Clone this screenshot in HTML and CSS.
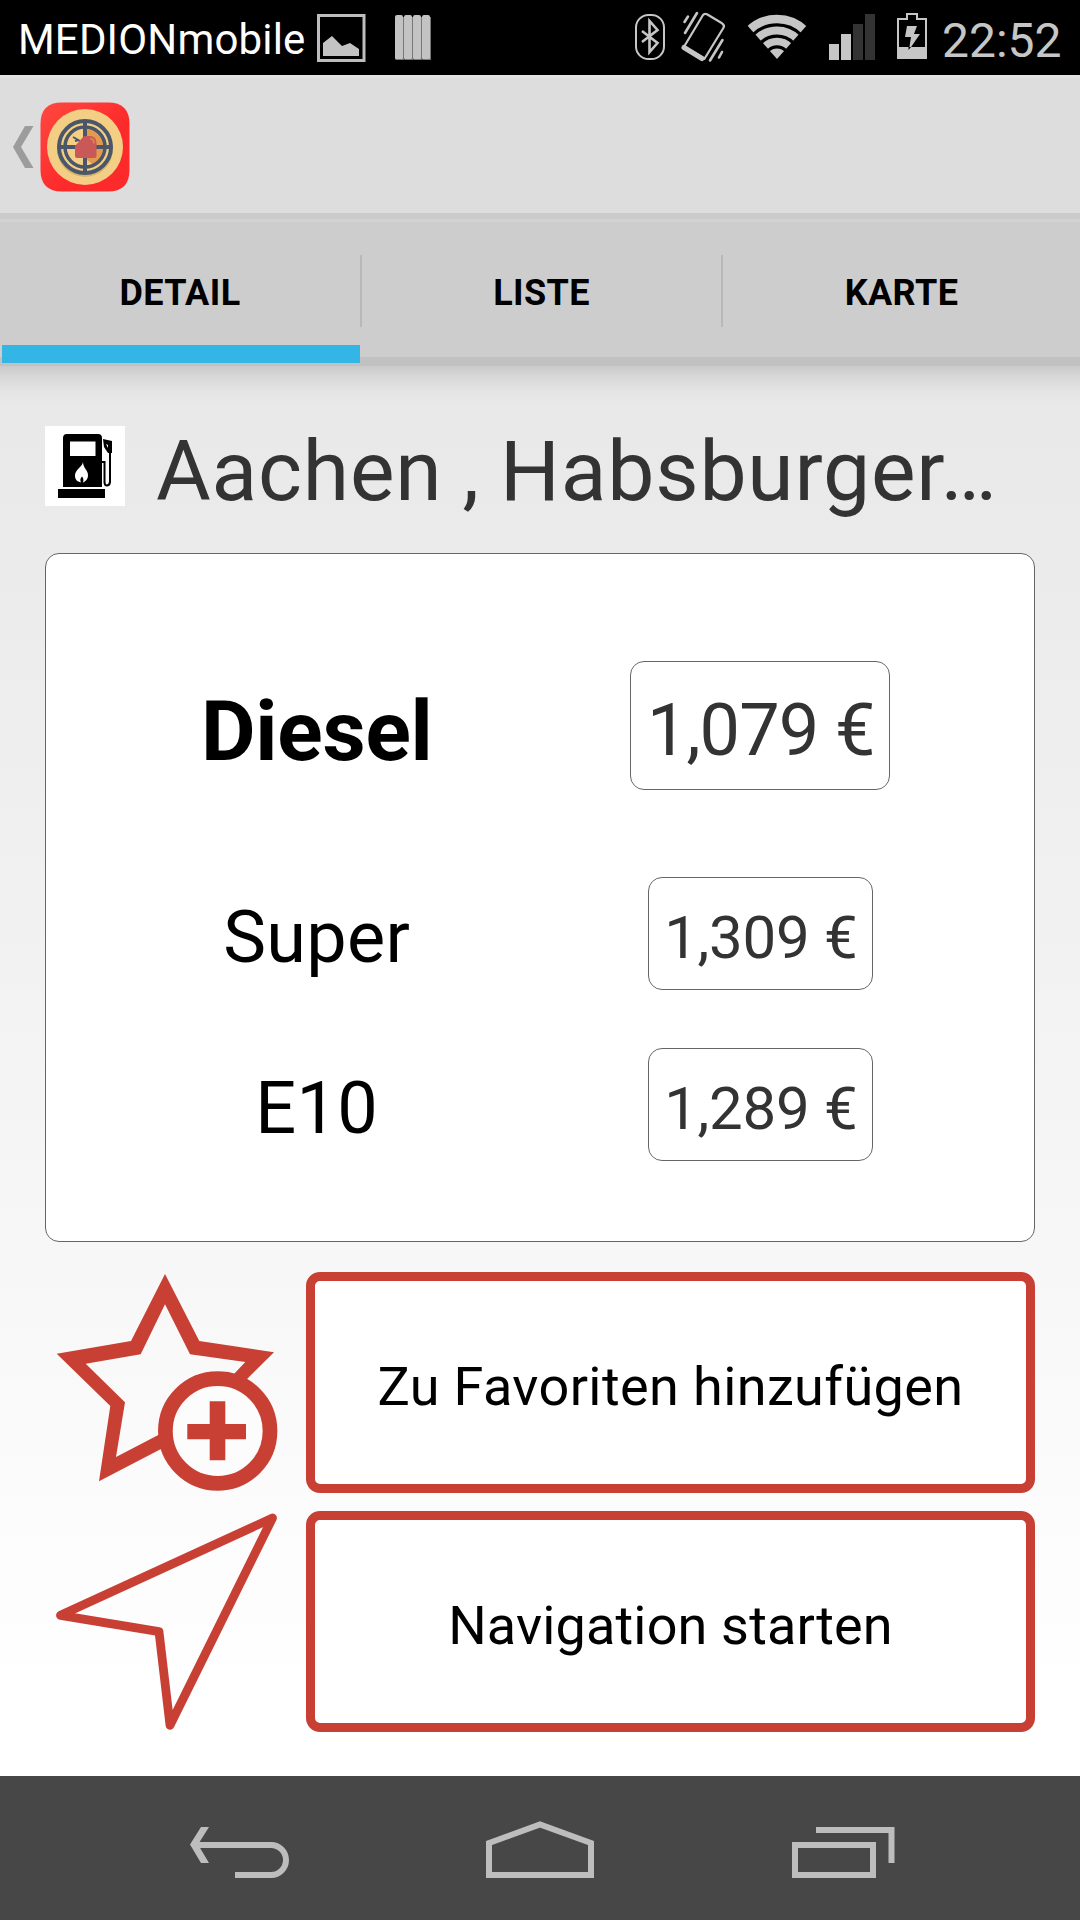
FILE: index.html
```html
<!DOCTYPE html>
<html lang="de">
<head>
<meta charset="utf-8">
<title>Aachen, Habsburger</title>
<link rel="stylesheet" href="styles.css">
</head>
<body>
<header class="status">
  <span class="carrier">MEDIONmobile</span>
  <svg class="status-left" width="124" height="75" viewBox="312 0 124 75">
    <rect x="318.5" y="15.5" width="45.500" height="45" fill="none" stroke="#bdbdbd" stroke-width="3"/>
    <path d="M323 56V43l9-7 10 10 8-3 9 6v7z" fill="#c3c3c3"/>
    <g fill="#c3c3c3"><rect x="395" y="15" width="8" height="45" rx="2"/><rect x="404" y="15" width="8" height="45" rx="2"/><rect x="413" y="15" width="8" height="45" rx="2"/><rect x="422" y="15" width="8" height="45" rx="2"/></g>
    <path d="M403.500 17v43M412.500 17v43M421.500 17v43M430.500 17v43M396 59.500h7M405 59.500h7M414 59.500h7M423 59.500h7" stroke="#777"/>
  </svg>
  <svg class="status-right" width="310" height="75" viewBox="630 0 310 75">
    <g fill="none" stroke="#c6c6c6">
      <rect x="636" y="15" width="28" height="44" rx="12.500" stroke-width="2"/>
      <path d="M642 31l15.500 12-8 9V21l8 9L642 42" stroke-width="2.600"/>
      <path d="M703 15q1.500-2 4-.7l15 9q3 2 1.500 4.500l-19 31-20.500-12z" stroke-width="2.200" stroke-linejoin="round"/>
      <path d="M684 47.500l18 11" stroke-width="5" stroke-linecap="round"/>
      <path d="M697 13l-12 20M688 16.500l-3.500 5.500M722.500 40l-12.500 20.500M722 52l-3 5.500" stroke-width="2.600" stroke-linecap="round"/>
    </g>
    <clipPath id="wedge"><path d="M777 59L746 24V10h62v14z"/></clipPath>
    <g clip-path="url(#wedge)" fill="none" stroke="#c6c6c6">
      <circle cx="777" cy="59" r="40" stroke-width="8.500"/>
      <circle cx="777" cy="59" r="28.500" stroke-width="8"/>
      <circle cx="777" cy="59" r="17.500" stroke-width="7.500"/>
      <circle cx="777" cy="59" r="5.300" stroke-width="10.600"/>
    </g>
    <path d="M829 44h10v16h-10zM841 34h10v26h-10z" fill="#c6c6c6"/>
    <path d="M853 24h10v36h-10zM865 14h10v46h-10z" fill="#333"/>
    <path d="M898 58V19h9v-5h10v5h9v39z" fill="none" stroke="#c6c6c6" stroke-width="2"/>
    <path d="M897 47h30v12h-30z" fill="#c6c6c6"/>
    <path d="M907 26h10l-3 8h6l-11 16 2-13h-6z" fill="#c6c6c6"/>
    <path d="M911 47h-2.500v3z"/>
  </svg>
  <span class="clock">22:52</span>
</header>

<div class="actionbar">
  <svg width="130" height="138" viewBox="0 0 130 138">
    <defs><linearGradient id="red" x1="0" y1="0" x2="1" y2="1"><stop offset="0" stop-color="#ff4840"/><stop offset=".6" stop-color="#fd2a2c"/></linearGradient></defs>
    <path d="M25 51h8.500L21 72l12.500 21H25L13 72z" fill="#9c9c9c"/>
    <path d="M62 27.500h46q21.500 0 21.500 21.500v46q0 21.500-21.500 21.500H62q-21.500 0-21.500-21.500V49q0-21.500 21.500-21.500z" fill="url(#red)"/>
    <circle cx="85" cy="72" r="38" fill="#f3cf85"/>
    <circle cx="85" cy="74" r="28" fill="#d3b26f"/>
    <circle cx="85" cy="72" r="27" fill="#f3cf85"/>
    <path d="M85 52a20 20 0 0 1 8 38l-8-7z" fill="#e39a4e"/>
    <g fill="none" stroke="#4b5668">
      <circle cx="85" cy="72" r="26" stroke-width="4"/>
      <circle cx="85" cy="72" r="20" stroke-width="3.500"/>
      <path d="M85 45v54M58 72h54" stroke-width="4"/>
      <path d="M73 62l7 4M75 66l4-1" stroke-width="2"/>
    </g>
    <path d="M75 71l8-9q1-1 3-1h5q5.500 1 5.500 7v13q0 2-2 2H77q-2 0-2-2z" fill="#c95959"/>
    <path d="M90 63.500q4 0 4 5" fill="none" stroke="#de8054" stroke-width="2"/>
  </svg>
</div>

<nav class="tabs">
  <a class="tab active">DETAIL</a>
  <a class="tab">LISTE</a>
  <a class="tab">KARTE</a>
</nav>

<main class="content">
  <div class="heading">
    <svg width="80" height="80" viewBox="0 0 80 80">
      <path d="M0 0h80v80H0z" fill="#fff"/>
      <path d="M22 8h31q4 0 4 4v49H18V12q0-4 4-4zM13 63h47v9H13z"/>
      <path d="M25 15.500h25.500V30H25z" fill="#fff"/>
      <path d="M38 36c0 6 5 8 5 13 0 4-2 6-5 7.500 1-3 0-5-1-6-2 2-2 4-1 6-4-1-6-3-6-7 0-6 7-8 8-13.500z" fill="#fff"/>
      <path d="M58 13l9 2v12h-4l-4-6z"/>
      <path d="M61 18l2 1v3z" fill="#fff"/>
      <path d="M57 36h2.500v20q0 3.500 2.500 3.500t3-3.500V27" fill="none" stroke="#000" stroke-width="2"/>
    </svg>
    <h1>Aachen , Habsburger…</h1>
  </div>

  <section class="prices">
    <span class="fuel main-fuel">Diesel</span><span class="price main-price">1,079 €</span>
    <span class="fuel">Super</span><span class="price">1,309 €</span>
    <span class="fuel">E10</span><span class="price">1,289 €</span>
  </section>

  <div class="action">
    <svg width="243" height="221" viewBox="0 0 243 221" fill="#c84034">
      <path fill-rule="evenodd" d="M120 2l34.300 67 74.700 11.300L202 107l-86 70-62 32.300L65.300 134 11.700 81.700 86 69zM120 32.300L95.700 82.300l-55 9.400L80 130.300 71 185l42.300-22 75-60.300 12-12.700-55.300-7.700z"/>
      <circle cx="172.700" cy="159" r="52.300" fill="#fcfcfc" stroke="#c84034" stroke-width="14.700"/>
      <path d="M164.700 129.300h15.600V152H201v15.300h-20.700v21h-15.600v-21h-22.400V152h22.400z"/>
    </svg>
    <button class="favorite">Zu Favoriten hinzufügen</button>
  </div>
  <div class="action">
    <svg width="243" height="221" viewBox="0 0 243 221">
      <path d="M227.500 7L15.500 104.300l98.500 16.400 11 93.600z" fill="none" stroke="#c84034" stroke-width="8.800" stroke-linejoin="round"/>
    </svg>
    <button class="navigate">Navigation starten</button>
  </div>
</main>

<footer class="navbar">
  <svg width="1080" height="144" viewBox="0 1776 1080 144" fill="none" stroke="#bdbdbd" stroke-width="6">
    <path d="M198 1845h73a15 15 0 0 1 0 30h-36"/>
    <path d="M206 1827h8l-11 17.500 11 18.500h-8l-11-18.500z" fill="#bdbdbd" stroke="none" transform="translate(-5 0)"/>
    <path d="M489 1875v-32l51-18.500 51 18.500v32z"/>
    <path d="M795 1845h78v30h-78zM816 1830h75.500v33"/>
  </svg>
</footer>
</body>
</html>
```
FILE: styles.css
```css
* { box-sizing: border-box; }

body {
  margin: 0;
  width: 1080px;
  height: 1920px;
  display: flex;
  flex-direction: column;
  font-family: Roboto, "Liberation Sans", sans-serif;
  color: #000;
  background: linear-gradient(#e8e8e8 366px, #ebebeb 560px, #f7f7f7 1260px, #fff 1700px);
}

svg { display: block; flex: none; }

.status {
  height: 75px;
  display: flex;
  align-items: center;
  padding: 0 18px;
  background: #000;
  color: #fff;
}
.carrier { font-size: 42px; letter-spacing: .17px; width: 294px; padding-top: 4px; }
.status-right { margin-left: 194px; }
.clock { font-size: 48px; color: #c6c6c6; margin-left: 2px; padding-top: 6px; }

.actionbar {
  height: 138px;
  background: #ddd;
  border-top: 3px solid #e2e2e2;
}
.actionbar svg { margin-top: -3px; }

.tabs {
  height: 153px;
  display: grid;
  grid-template-columns: 360px 361px 359px;
  background: linear-gradient(#cbcbcb 6px, #d2d2d2 6px, #d2d2d2 9px, #cdcdcd 9px, #cdcdcd 144px, #c1c1c1 144px);
}
.tab {
  position: relative;
  display: flex;
  align-items: center;
  justify-content: center;
  padding-top: 6px;
  font-size: 36px;
  font-weight: 700;
  letter-spacing: .4px;
}
.tab + .tab { padding-left: 2px; }
.tab + .tab::before {
  content: "";
  position: absolute;
  left: 0;
  top: 42px;
  width: 2px;
  height: 72px;
  background: #b8b8b8;
}
.active::after {
  content: "";
  position: absolute;
  left: 2px;
  right: 0;
  bottom: 3px;
  height: 18px;
  background: #33b5e5;
}

.content {
  height: 1410px;
  padding: 48px 45px 0;
  background: linear-gradient(rgba(0, 0, 0, .13), rgba(0, 0, 0, .065) 12px, rgba(0, 0, 0, .02) 25px, transparent 38px);
}

.heading {
  display: flex;
  align-items: center;
  height: 116px;
  gap: 31px;
  color: #333;
}
.heading svg { margin-bottom: 12px; }
h1 {
  margin: 0;
  font-size: 84px;
  font-weight: 400;
  letter-spacing: .8px;
  word-spacing: -1.5px;
  line-height: 100px;
  white-space: nowrap;
}

.prices {
  margin-top: 23px;
  height: 689px;
  padding: 107px 52px 0 49px;
  display: grid;
  grid-template-columns: 1fr 1fr;
  grid-template-rows: 158px 113px 113px;
  row-gap: 58px;
  align-items: center;
  justify-items: center;
  background: #fff;
  border: 1px solid #666;
  border-radius: 14px;
}
.fuel { font-size: 72px; letter-spacing: .3px; padding-top: 7px; }
.main-fuel { font-size: 84px; font-weight: 700; letter-spacing: -.2px; padding-top: 21px; }
.price {
  width: 225px;
  height: 113px;
  display: flex;
  align-items: center;
  justify-content: center;
  padding: 7px 0 0 1px;
  border: 1px solid #666;
  border-radius: 14px;
  font-size: 60px;
  letter-spacing: -.3px;
  color: #333;
}
.main-price { width: 260px; height: 129px; padding-top: 10px; font-size: 72px; letter-spacing: -.95px; }
.main-fuel, .main-price { align-self: start; }

.action {
  margin-top: 18px;
  display: flex;
  gap: 18px;
}
.prices + .action { margin-top: 30px; }
button {
  flex: 1;
  height: 221px;
  padding: 7px 0 0;
  background: #fff;
  border: 9px solid #c84034;
  border-radius: 14px;
  font: 400 54px Roboto, "Liberation Sans", sans-serif;
  color: #000;
}
.favorite { letter-spacing: .4px; }
.navigate { letter-spacing: .15px; }

.navbar {
  height: 144px;
  background: #474747;
}
```
